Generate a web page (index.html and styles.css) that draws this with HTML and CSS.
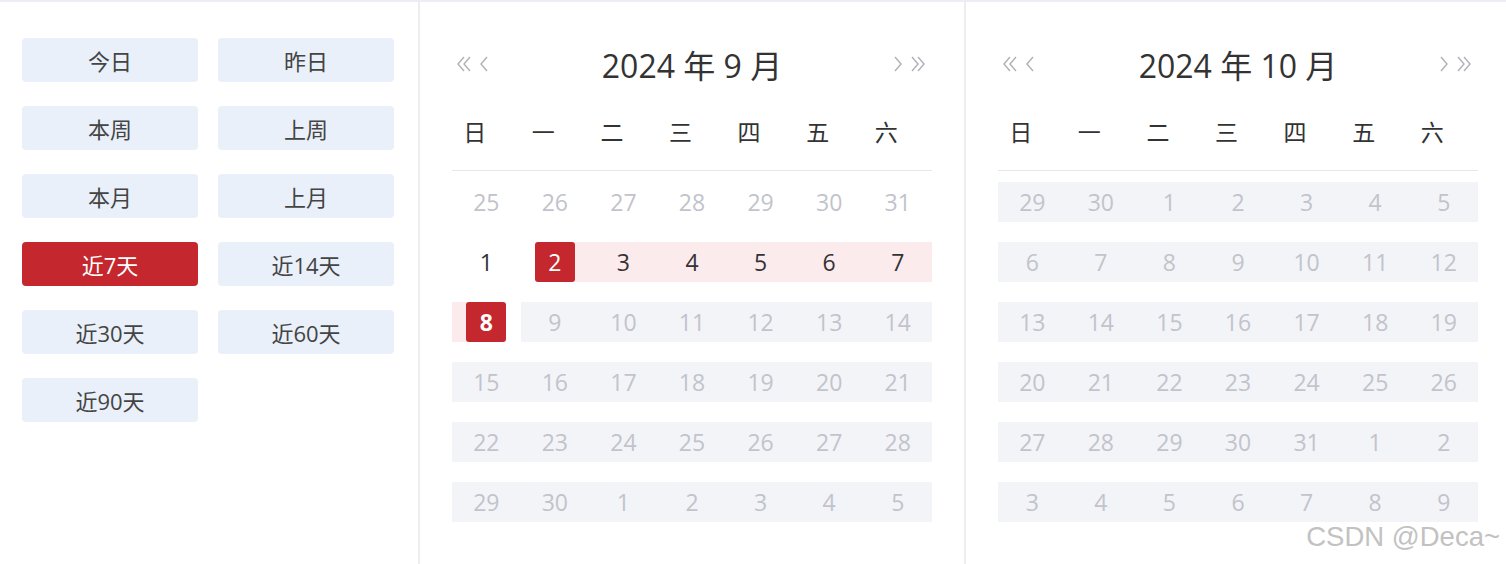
FILE: index.html
```html
<!DOCTYPE html>
<html lang="zh-CN">

<head>
    <meta charset="UTF-8">
    <title>日期范围选择</title>
    <link rel="stylesheet" href="styles.css">
</head>

<body>
    <div class="picker">
        <div class="shortcuts">
            <div class="shortcut">今日</div>
            <div class="shortcut">昨日</div>
            <div class="shortcut">本周</div>
            <div class="shortcut">上周</div>
            <div class="shortcut">本月</div>
            <div class="shortcut">上月</div>
            <div class="shortcut active">近7天</div>
            <div class="shortcut">近14天</div>
            <div class="shortcut">近30天</div>
            <div class="shortcut">近60天</div>
            <div class="shortcut">近90天</div>
        </div>

        <div class="panel">
            <div class="cal-head">
                <div class="nav">
                    <svg width="16" height="18" viewBox="0 0 16 18"><path d="M8 2 L2 9 L8 16 M14 2 L8 9 L14 16" fill="none" stroke="#b0b0b8" stroke-width="1.4"/></svg>
                    <svg width="12" height="18" viewBox="0 0 12 18"><path d="M9 2 L3 9 L9 16" fill="none" stroke="#b0b0b8" stroke-width="1.4"/></svg>
                </div>
                <div class="title">2024 年 9 月</div>
                <div class="nav">
                    <svg width="12" height="18" viewBox="0 0 12 18"><path d="M3 2 L9 9 L3 16" fill="none" stroke="#b0b0b8" stroke-width="1.4"/></svg>
                    <svg width="16" height="18" viewBox="0 0 16 18"><path d="M2 2 L8 9 L2 16 M8 2 L14 9 L8 16" fill="none" stroke="#b0b0b8" stroke-width="1.4"/></svg>
                </div>
            </div>
            <div class="weekdays">
                <span>日</span><span>一</span><span>二</span><span>三</span><span>四</span><span>五</span><span>六</span>
            </div>
            <div class="week plain">
                <span class="day muted">25</span><span class="day muted">26</span><span class="day muted">27</span><span class="day muted">28</span><span class="day muted">29</span><span class="day muted">30</span><span class="day muted">31</span>
            </div>
            <div class="week plain">
                <span class="day">1</span>
                <span class="day range-start"><b>2</b></span>
                <span class="day in-range">3</span><span class="day in-range">4</span><span class="day in-range">5</span><span class="day in-range">6</span><span class="day in-range">7</span>
            </div>
            <div class="week">
                <span class="day range-end"><b>8</b></span>
                <span class="day muted">9</span><span class="day muted">10</span><span class="day muted">11</span><span class="day muted">12</span><span class="day muted">13</span><span class="day muted">14</span>
            </div>
            <div class="week">
                <span class="day muted">15</span><span class="day muted">16</span><span class="day muted">17</span><span class="day muted">18</span><span class="day muted">19</span><span class="day muted">20</span><span class="day muted">21</span>
            </div>
            <div class="week">
                <span class="day muted">22</span><span class="day muted">23</span><span class="day muted">24</span><span class="day muted">25</span><span class="day muted">26</span><span class="day muted">27</span><span class="day muted">28</span>
            </div>
            <div class="week">
                <span class="day muted">29</span><span class="day muted">30</span><span class="day muted">1</span><span class="day muted">2</span><span class="day muted">3</span><span class="day muted">4</span><span class="day muted">5</span>
            </div>
        </div>

        <div class="panel last">
            <div class="cal-head">
                <div class="nav">
                    <svg width="16" height="18" viewBox="0 0 16 18"><path d="M8 2 L2 9 L8 16 M14 2 L8 9 L14 16" fill="none" stroke="#b0b0b8" stroke-width="1.4"/></svg>
                    <svg width="12" height="18" viewBox="0 0 12 18"><path d="M9 2 L3 9 L9 16" fill="none" stroke="#b0b0b8" stroke-width="1.4"/></svg>
                </div>
                <div class="title">2024 年 10 月</div>
                <div class="nav">
                    <svg width="12" height="18" viewBox="0 0 12 18"><path d="M3 2 L9 9 L3 16" fill="none" stroke="#b0b0b8" stroke-width="1.4"/></svg>
                    <svg width="16" height="18" viewBox="0 0 16 18"><path d="M2 2 L8 9 L2 16 M8 2 L14 9 L8 16" fill="none" stroke="#b0b0b8" stroke-width="1.4"/></svg>
                </div>
            </div>
            <div class="weekdays">
                <span>日</span><span>一</span><span>二</span><span>三</span><span>四</span><span>五</span><span>六</span>
            </div>
            <div class="week">
                <span class="day muted">29</span><span class="day muted">30</span><span class="day muted">1</span><span class="day muted">2</span><span class="day muted">3</span><span class="day muted">4</span><span class="day muted">5</span>
            </div>
            <div class="week">
                <span class="day muted">6</span><span class="day muted">7</span><span class="day muted">8</span><span class="day muted">9</span><span class="day muted">10</span><span class="day muted">11</span><span class="day muted">12</span>
            </div>
            <div class="week">
                <span class="day muted">13</span><span class="day muted">14</span><span class="day muted">15</span><span class="day muted">16</span><span class="day muted">17</span><span class="day muted">18</span><span class="day muted">19</span>
            </div>
            <div class="week">
                <span class="day muted">20</span><span class="day muted">21</span><span class="day muted">22</span><span class="day muted">23</span><span class="day muted">24</span><span class="day muted">25</span><span class="day muted">26</span>
            </div>
            <div class="week">
                <span class="day muted">27</span><span class="day muted">28</span><span class="day muted">29</span><span class="day muted">30</span><span class="day muted">31</span><span class="day muted">1</span><span class="day muted">2</span>
            </div>
            <div class="week">
                <span class="day muted">3</span><span class="day muted">4</span><span class="day muted">5</span><span class="day muted">6</span><span class="day muted">7</span><span class="day muted">8</span><span class="day muted">9</span>
            </div>
            <div class="watermark">CSDN @Deca~</div>
        </div>
    </div>
</body>

</html>
```

FILE: styles.css
```css
body {
    margin: 0;
    padding: 0;
    background: #fff;
    font-family: "Open Sans", "Noto Sans CJK SC", sans-serif;
    color: #333;
}

.picker {
    display: flex;
    height: 562px;
    border-top: 2px solid #eceef3;
}

/* left column with quick ranges */
.shortcuts {
    width: 396px;
    padding: 36px 0 0 22px;
    border-right: 2px solid #eceef2;
    display: grid;
    grid-template-columns: 176px 176px;
    column-gap: 20px;
    row-gap: 24px;
    align-content: start;
}

.shortcut {
    height: 44px;
    border-radius: 4px;
    background-color: #e9f0fa;
    color: #444;
    font-size: 22px;
    display: flex;
    align-items: center;
    justify-content: center;
}

.shortcut.active {
    background-color: #c4272e;
    color: #fff;
}

/* month panels */
.panel {
    width: 480px;
    padding: 0 32px;
    border-right: 2px solid #eceef2;
    position: relative;
}

.panel.last {
    border-right: none;
    padding-right: 0;
}

.cal-head {
    margin-top: 38px;
    height: 48px;
    padding: 0 4px;
    display: flex;
    align-items: center;
    justify-content: space-between;
}

.nav {
    width: 36px;
    display: flex;
    align-items: center;
    gap: 6px;
}

.title {
    font-size: 32px;
    color: #333;
}

.weekdays {
    margin-top: 23px;
    height: 40px;
    padding-bottom: 19px;
    border-bottom: 1px solid #e6e6ef;
    display: flex;
    align-items: center;
    font-size: 23px;
    color: #333;
}

.weekdays span {
    flex: 1;
    padding-right: 23px;
    text-align: center;
}

.week {
    height: 40px;
    margin-top: 20px;
    display: flex;
    background-color: #f3f4f8;
}

.weekdays + .week {
    margin-top: 11px;
}

.week.plain {
    background-color: transparent;
}

.day {
    flex: 1;
    display: flex;
    align-items: center;
    justify-content: center;
    font-size: 23px;
    color: #333;
}

.day.muted {
    color: #c2c3cb;
}

.day.in-range {
    background-color: #fcebed;
}

.day b {
    width: 40px;
    height: 40px;
    border-radius: 3px;
    background-color: #c4272e;
    color: #fff;
    display: flex;
    align-items: center;
    justify-content: center;
    font-weight: normal;
}

.day.range-start {
    background: linear-gradient(to right, #fff 50%, #fcebed 50%);
}

.day.range-end {
    background: linear-gradient(to right, #fcebed 50%, #fff 50%);
}

.day.range-end b {
    font-weight: bold;
}

.watermark {
    position: absolute;
    right: -22px;
    bottom: 11px;
    font-family: "Liberation Sans", sans-serif;
    font-size: 27.5px;
    color: #c2c2c2;
}
```
